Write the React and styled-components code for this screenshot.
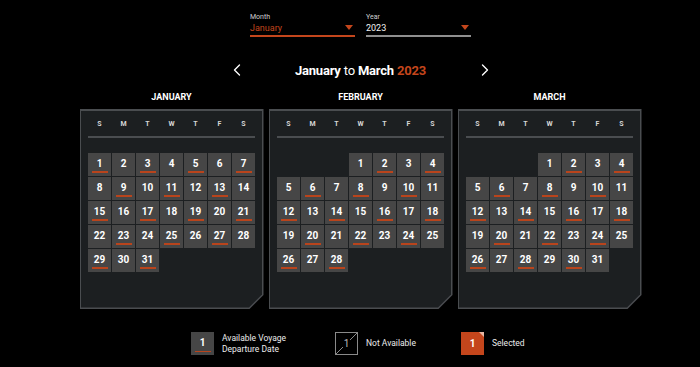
import React from 'react';
import styled, { createGlobalStyle } from 'styled-components';
import { ChevronLeft, ChevronRight } from 'lucide-react';

const ORANGE = '#c4461c';

const GlobalStyle = createGlobalStyle`
	html, body {
		margin: 0;
		background: #000;
		font-family: Roboto, 'Liberation Sans', sans-serif;
		color: #fff;
	}
`;

const months = [
	{ name: 'January', start: 0, days: 31, marked: d => d % 2 === 1 },
	{ name: 'February', start: 3, days: 28, marked: d => d % 2 === 0 },
	{ name: 'March', start: 3, days: 31, marked: d => d % 2 === 0 },
];

const weekDays = ['S', 'M', 'T', 'W', 'T', 'F', 'S'];

export default function App() {
	return (
		<>
			<GlobalStyle />
			<Page>
				<Selects>
					<Select $active>
						<SelectLabel>Month</SelectLabel>
						<SelectValue $active>January</SelectValue>
						<Caret />
					</Select>
					<Select>
						<SelectLabel>Year</SelectLabel>
						<SelectValue>2023</SelectValue>
						<Caret />
					</Select>
				</Selects>
				<TitleRow>
					<NavButton>
						<ChevronLeft size={20} strokeWidth={1.6} />
					</NavButton>
					<Title>
						January <Light>to</Light> March <Year>2023</Year>
					</Title>
					<NavButton>
						<ChevronRight size={20} strokeWidth={1.6} />
					</NavButton>
				</TitleRow>
				<Months>
					{months.map(m => (
						<MonthColumn key={m.name}>
							<MonthName>{m.name}</MonthName>
							<Panel>
								<PanelInner>
									<WeekRow>
										{weekDays.map((w, i) => (
											<WeekDay key={i}>{w}</WeekDay>
										))}
									</WeekRow>
									<Divider />
									<DayGrid>
										{Array.from({ length: m.start }).map((_, i) => (
											<span key={'e' + i} />
										))}
										{Array.from({ length: m.days }).map((_, i) => (
											<Day key={i} $marked={m.marked(i + 1)}>
												{i + 1}
											</Day>
										))}
									</DayGrid>
								</PanelInner>
							</Panel>
						</MonthColumn>
					))}
				</Months>
				<Legend>
					<LegendItem $width={144}>
						<Day $marked>1</Day>
						<LegendText>
							Available Voyage
							<br />
							Departure Date
						</LegendText>
					</LegendItem>
					<LegendItem $width={126}>
						<Unavailable>
							<svg width="23" height="23" viewBox="0 0 23 23">
								<line x1="1" y1="22" x2="22" y2="1" stroke="#8a8a8a" strokeWidth="1" />
							</svg>
							<span>1</span>
						</Unavailable>
						<LegendText>Not Available</LegendText>
					</LegendItem>
					<LegendItem>
						<Selected>1</Selected>
						<LegendText>Selected</LegendText>
					</LegendItem>
				</Legend>
			</Page>
		</>
	);
}

const Page = styled.div`
	width: 700px;
	height: 367px;
	box-sizing: border-box;
	padding: 13px 0 0 21px;
	overflow: hidden;
`;

const Selects = styled.div`
	display: flex;
	justify-content: center;
	gap: 11px;
`;

const Select = styled.div`
	position: relative;
	width: 105px;
	height: 22px;
	border-bottom: 2px solid ${p => (p.$active ? ORANGE : '#8f8f8f')};
	color: ${p => (p.$active ? ORANGE : '#fff')};
`;

const SelectLabel = styled.div`
	font-size: 7px;
	color: #d0d0d0;
	line-height: 9px;
`;

const SelectValue = styled.div`
	font-size: 9px;
	line-height: 12px;
	color: ${p => (p.$active ? ORANGE : '#f0f0f0')};
`;

const Caret = styled.span`
	position: absolute;
	right: 2px;
	top: 12px;
	width: 0;
	height: 0;
	border-left: 4px solid transparent;
	border-right: 4px solid transparent;
	border-top: 5px solid ${ORANGE};
`;

const TitleRow = styled.div`
	display: flex;
	justify-content: center;
	align-items: center;
	margin-top: 22px;
	height: 22px;
`;

const NavButton = styled.div`
	width: 20px;
	display: flex;
	justify-content: center;
	color: #fff;
`;

const Title = styled.div`
	width: 228px;
	text-align: center;
	font-size: 13px;
	font-weight: 700;
	letter-spacing: -0.2px;
`;

const Light = styled.span`
	font-weight: 400;
`;

const Year = styled.span`
	color: ${ORANGE};
`;

const Months = styled.div`
	display: flex;
	justify-content: center;
	gap: 5px;
	margin-top: 7px;
`;

const MonthColumn = styled.div`
	display: flex;
	flex-direction: column;
	align-items: center;
`;

const MonthName = styled.div`
	font-size: 9px;
	font-weight: 700;
	text-transform: uppercase;
	height: 18px;
	line-height: 18px;
	margin-bottom: 3px;
`;

const Panel = styled.div`
	width: 184px;
	height: 200px;
	background: #4a4d50;
	padding: 1.5px;
	box-sizing: border-box;
	clip-path: polygon(0 0, 100% 0, 100% calc(100% - 14px), calc(100% - 14px) 100%, 0 100%);
`;

const PanelInner = styled.div`
	height: 100%;
	background: #1c1f21;
	box-sizing: border-box;
	padding: 7px 7px 0 7px;
	clip-path: polygon(0 0, 100% 0, 100% calc(100% - 13px), calc(100% - 13px) 100%, 0 100%);
`;

const WeekRow = styled.div`
	display: grid;
	grid-template-columns: repeat(7, 1fr);
	gap: 1px;
	height: 12px;
	align-items: center;
`;

const WeekDay = styled.div`
	text-align: center;
	font-size: 7px;
	font-weight: 700;
	color: #d6d6d6;
`;

const Divider = styled.div`
	height: 2px;
	background: #4a4d50;
	margin: 6px 0 15px;
`;

const DayGrid = styled.div`
	display: grid;
	grid-template-columns: repeat(7, 23px);
	grid-auto-rows: 23px;
	gap: 1px;
`;

const Day = styled.div`
	position: relative;
	width: 23px;
	height: 23px;
	flex: none;
	background: #464646;
	box-sizing: border-box;
	display: flex;
	justify-content: center;
	align-items: center;
	padding-bottom: 2px;
	font-size: 10px;
	font-weight: 700;
	color: #fff;
	&::after {
		content: '';
		display: ${p => (p.$marked ? 'block' : 'none')};
		position: absolute;
		left: 3.5px;
		right: 3.5px;
		bottom: 3px;
		height: 1.2px;
		background: #b9441c;
	}
`;

const Legend = styled.div`
	display: flex;
	align-items: center;
	margin-top: 23px;
	margin-left: 170px;
`;

const LegendItem = styled.div`
	display: flex;
	align-items: center;
	gap: 8px;
	width: ${p => (p.$width ? p.$width + 'px' : 'auto')};
`;

const LegendText = styled.div`
	font-size: 8.5px;
	line-height: 10.5px;
	color: #ececec;
`;

const Unavailable = styled.div`
	position: relative;
	width: 23px;
	height: 23px;
	flex: none;
	box-sizing: border-box;
	border: 1px solid #8a8a8a;
	display: flex;
	justify-content: center;
	align-items: center;
	font-size: 10px;
	color: #bdbdbd;
	svg {
		position: absolute;
		left: -1px;
		top: -1px;
	}
	span {
		position: relative;
		background: #000;
		padding: 0 1px;
	}
`;

const Selected = styled.div`
	position: relative;
	width: 23px;
	height: 23px;
	flex: none;
	background: ${ORANGE};
	display: flex;
	justify-content: center;
	align-items: center;
	font-size: 10px;
	font-weight: 700;
	color: #fff;
	&::after {
		content: '';
		position: absolute;
		top: 0;
		right: 0;
		border-top: 5px solid #e9b7a3;
		border-left: 5px solid transparent;
	}
`;
